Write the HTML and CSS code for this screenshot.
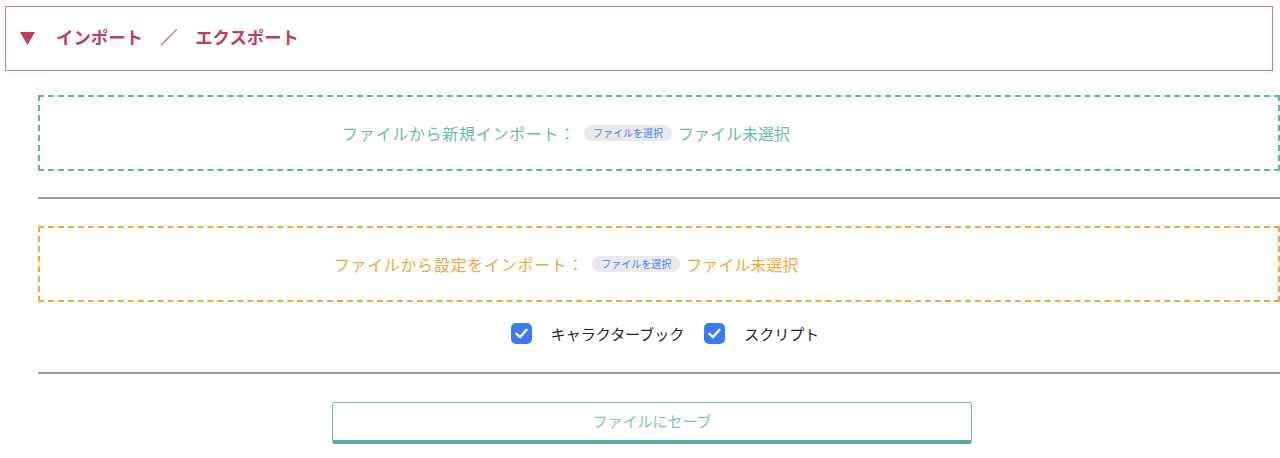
FILE: index.html
```html
<!DOCTYPE html>
<html lang="ja">
<head>
<meta charset="utf-8">
<title>インポート / エクスポート</title>
<link rel="stylesheet" href="styles.css">
</head>
<body>
<div class="panel-header">
  <svg class="tri" width="15" height="13" viewBox="0 0 15 13"><polygon points="0,0 15,0 7.5,13" fill="#c23b5f"/></svg>
  <span class="title">インポート　／　エクスポート</span>
</div>
<div class="content">
  <div class="drop drop-teal">
    <span class="label">ファイルから新規インポート：</span>
    <span class="file-btn">ファイルを選択</span>
    <span class="file-name">ファイル未選択</span>
  </div>
  <hr class="rule">
  <div class="drop drop-orange">
    <span class="label">ファイルから設定をインポート：</span>
    <span class="file-btn">ファイルを選択</span>
    <span class="file-name">ファイル未選択</span>
  </div>
  <div class="checks">
    <label class="check"><span class="box"><svg width="13" height="11" viewBox="0 0 13 11"><polyline points="1.5,5.8 5,9.2 11.5,1.8" fill="none" stroke="#fff" stroke-width="2.4" stroke-linecap="round" stroke-linejoin="round"/></svg></span><span class="check-text">キャラクターブック</span></label>
    <label class="check"><span class="box"><svg width="13" height="11" viewBox="0 0 13 11"><polyline points="1.5,5.8 5,9.2 11.5,1.8" fill="none" stroke="#fff" stroke-width="2.4" stroke-linecap="round" stroke-linejoin="round"/></svg></span><span class="check-text">スクリプト</span></label>
  </div>
  <hr class="rule rule-2">
  <button class="save">ファイルにセーブ</button>
</div>
</body>
</html>
```

FILE: styles.css
```css
html, body {
  margin: 0;
  padding: 0;
  background: #ffffff;
  font-family: "Noto Sans CJK JP", "Noto Sans", sans-serif;
  overflow: hidden;
}

.panel-header {
  box-sizing: border-box;
  margin: 6px 0 0 5px;
  width: 1268px;
  height: 65px;
  border: 1px solid #dd6f8c;
  display: flex;
  align-items: center;
  padding-left: 14px;
  color: #c23b5f;
}

.tri {
  display: block;
  margin-top: -1px;
}

.title {
  margin-left: 21px;
  margin-top: -3px;
  font-size: 17.4px;
  font-weight: 700;
  line-height: 1;
}

.content {
  margin-left: 38px;
  width: 1242px;
}

.drop {
  box-sizing: border-box;
  height: 76px;
  display: flex;
  align-items: center;
  justify-content: center;
  padding-right: 186px;
  padding-bottom: 1px;
  font-size: 16px;
}

.drop-teal {
  margin-top: 24px;
  border: 2px dashed #5ab5af;
  color: #6ab9b4;
}

.drop-orange {
  margin-top: 27px;
  border: 2px dashed #f5a93a;
  color: #f3a838;
}

.label {
  letter-spacing: 0.7px;
  margin-right: 8px;
}

.file-btn {
  display: inline-flex;
  align-items: center;
  justify-content: center;
  width: 88px;
  height: 16px;
  border-radius: 8px;
  background: #e8e8ed;
  color: #4a86dc;
  font-size: 10px;
  margin-right: 6px;
}

.rule {
  margin: 26px 0 0 0;
  border: 0;
  border-top: 2px solid #9b9b9b;
  height: 0;
}

.checks {
  display: flex;
  align-items: center;
  justify-content: center;
  margin-top: 20px;
  height: 22px;
  padding-left: 12px;
  gap: 20px;
}

.check {
  display: flex;
  align-items: center;
  gap: 19px;
}

.box {
  width: 21px;
  height: 21px;
  border-radius: 5px;
  background: #3a7bf3;
  display: flex;
  align-items: center;
  justify-content: center;
}

.check-text {
  font-size: 15px;
  color: #222222;
}

.rule-2 {
  margin-top: 28px;
}

.save {
  display: block;
  box-sizing: border-box;
  margin: 28px 0 0 294px;
  width: 640px;
  height: 42px;
  background: #ffffff;
  border: 1px solid #6fbcb7;
  border-bottom: 4px solid #5aa9a5;
  border-radius: 3px;
  color: #7cc2bd;
  font-family: "Noto Sans CJK JP", "Noto Sans", sans-serif;
  font-size: 15px;
  padding: 0 0 2px 0;
}
```
